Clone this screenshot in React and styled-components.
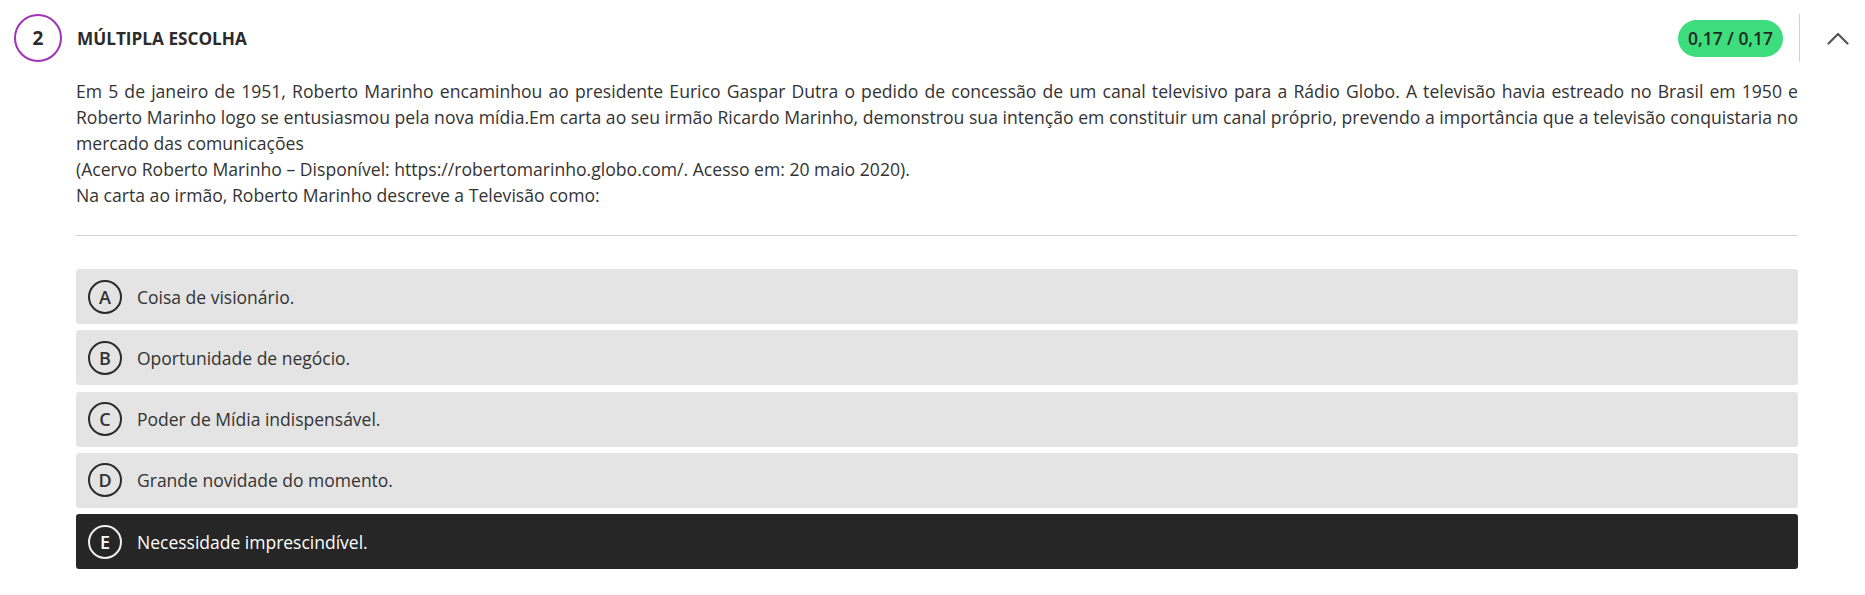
import React, { useState } from 'react';
import styled, { createGlobalStyle } from 'styled-components';

const GlobalStyle = createGlobalStyle`
    html, body {
        margin: 0;
        padding: 0;
        background: #fff;
        font-family: 'Open Sans', 'Noto Sans', sans-serif;
        color: #333;
    }
`;

const options = [
    { letter: 'A', text: 'Coisa de visionário.' },
    { letter: 'B', text: 'Oportunidade de negócio.' },
    { letter: 'C', text: 'Poder de Mídia indispensável.' },
    { letter: 'D', text: 'Grande novidade do momento.' },
    { letter: 'E', text: 'Necessidade imprescindível.' },
];

const App = () => {
    const [selected, setSelected] = useState('E');

    return (
        <>
            <GlobalStyle />
            <Question>
                <Header>
                    <Number>2</Number>
                    <Title>Múltipla escolha</Title>
                    <Score>0,17 / 0,17</Score>
                    <Toggle aria-label="Recolher">
                        <svg width="22" height="13" viewBox="0 0 22 13" fill="none">
                            <path d="M1.5 11.5 L11 2 L20.5 11.5" stroke="#555" strokeWidth="2.2" strokeLinecap="round" strokeLinejoin="round" />
                        </svg>
                    </Toggle>
                </Header>

                <Body>
                    <Statement>
                        Em 5 de janeiro de 1951, Roberto Marinho encaminhou ao presidente Eurico Gaspar Dutra o pedido de concessão de um canal televisivo para a Rádio Globo. A televisão havia estreado no Brasil em 1950 e Roberto Marinho logo se entusiasmou pela nova mídia.Em carta ao seu irmão Ricardo Marinho, demonstrou sua intenção em constituir um canal próprio, prevendo a importância que a televisão conquistaria no mercado das comunicações
                        <br />
                        (Acervo Roberto Marinho – Disponível: https://robertomarinho.globo.com/. Acesso em: 20 maio 2020).
                        <br />
                        Na carta ao irmão, Roberto Marinho descreve a Televisão como:
                    </Statement>

                    <Divider />

                    <OptionList>
                        {options.map((option) => (
                            <Option
                                key={option.letter}
                                $active={selected === option.letter}
                                onClick={() => setSelected(option.letter)}
                            >
                                <Letter $active={selected === option.letter}>{option.letter}</Letter>
                                <OptionText>{option.text}</OptionText>
                            </Option>
                        ))}
                    </OptionList>
                </Body>
            </Question>
        </>
    );
};

const Question = styled.section`
    padding: 14px 0 0 14px;
`;

const Header = styled.header`
    display: flex;
    align-items: center;
    height: 48px;
`;

const Number = styled.div`
    width: 48px;
    height: 48px;
    box-sizing: border-box;
    border: 2px solid #a033b8;
    border-radius: 50%;
    display: flex;
    align-items: center;
    justify-content: center;
    font-size: 19px;
    font-weight: 700;
    color: #2b2b2b;
`;

const Title = styled.h2`
    flex: 1;
    margin: 0 0 0 15px;
    font-size: 17.2px;
    font-weight: 700;
    text-transform: uppercase;
    color: #2b2b2b;
`;

const Score = styled.span`
    background: #3ddc7c;
    color: #1f2a22;
    border-radius: 19px;
    height: 37px;
    padding: 0 10px;
    display: flex;
    align-items: center;
    font-size: 17.4px;
    font-weight: 600;
    margin-right: 16px;
`;

const Toggle = styled.button`
    align-self: stretch;
    width: 66px;
    margin: 0;
    padding: 0 0 0 10px;
    border: none;
    border-left: 1px solid #d0d0d0;
    background: transparent;
    display: flex;
    align-items: center;
    justify-content: center;
    cursor: pointer;
`;

const Body = styled.div`
    margin: 16px 67px 0 62px;
`;

const Statement = styled.p`
    margin: 0;
    font-size: 17.6px;
    line-height: 26px;
    text-align: justify;
    color: #333;
`;

const Divider = styled.hr`
    margin: 27px 0 33px;
    border: none;
    border-top: 1px solid #d2d2d2;
`;

const OptionList = styled.div`
    display: flex;
    flex-direction: column;
    gap: 6.25px;
`;

const Option = styled.div`
    height: 55px;
    display: flex;
    align-items: center;
    padding: 0 12px;
    border-radius: 3px;
    background: ${({ $active }) => ($active ? '#262626' : '#e4e4e4')};
    color: ${({ $active }) => ($active ? '#fff' : '#333')};
    cursor: pointer;
`;

const Letter = styled.span`
    width: 34px;
    height: 34px;
    box-sizing: border-box;
    border: 2px solid ${({ $active }) => ($active ? '#eee' : '#2b2b2b')};
    border-radius: 50%;
    display: flex;
    align-items: center;
    justify-content: center;
    font-size: 18px;
    font-weight: 600;
    flex-shrink: 0;
`;

const OptionText = styled.span`
    margin-left: 15px;
    font-size: 17.5px;
`;

export default App;
